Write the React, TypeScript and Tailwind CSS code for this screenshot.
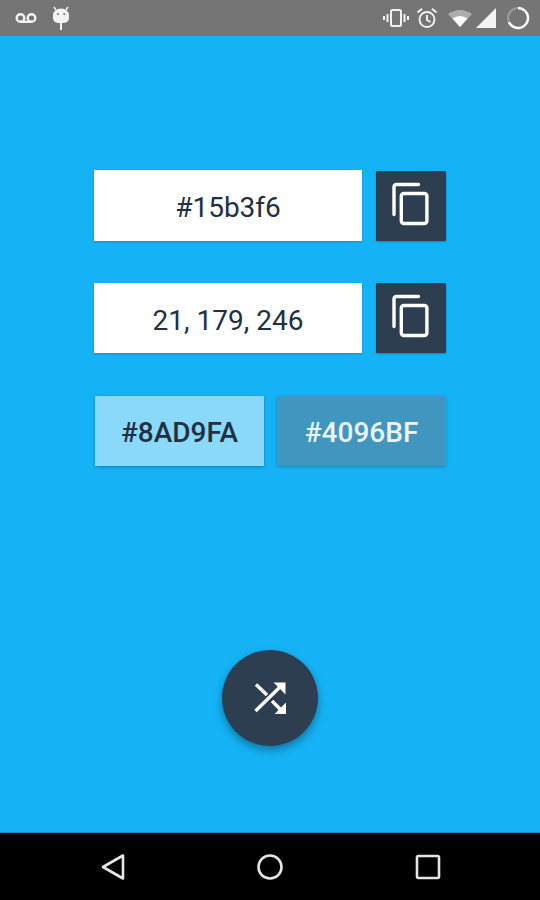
import React from "react";

function CopyIcon() {
  return (
    <svg width="44" height="48" viewBox="0 0 44 48" fill="none" stroke="white" strokeWidth="3.4">
      <path d="M29.5 2.5H7.5Q5 2.5 5 5V32.5" strokeLinecap="round" />
      <rect x="12.3" y="11.5" width="25.6" height="30" rx="2.5" />
    </svg>
  );
}

function CopyRow({ value, fieldHeight }: { value: string; fieldHeight: string }) {
  return (
    <div className="flex items-end gap-[14px]">
      <div
        className={
          "w-[268px] bg-white flex items-center justify-center pt-[5px] text-[28px] text-[#22303f] shadow-[0_1px_2px_rgba(0,0,0,0.2)] " +
          fieldHeight
        }
      >
        {value}
      </div>
      <div className="w-[70px] h-[70px] bg-[#2c3e50] flex items-center justify-center shadow-[0_1px_2px_rgba(0,0,0,0.25)]">
        <CopyIcon />
      </div>
    </div>
  );
}

function StatusBar() {
  return (
    <div className="h-[36px] bg-[#757575] flex items-center justify-between pl-[14px] pr-[10px] shrink-0">
      <div className="flex items-center gap-[14px]">
        <svg width="24" height="12" viewBox="0 0 24 12" fill="none" stroke="#f2f2f2" strokeWidth="2.4">
          <circle cx="6.5" cy="6" r="3.8" />
          <circle cx="17.5" cy="6" r="3.8" />
          <path d="M6.5 9.8H17.5" />
        </svg>
        <svg width="18" height="26" viewBox="0 0 18 26" fill="#f2f2f2">
          <path d="M1 10a8 6.5 0 0 1 16 0v3a5 5 0 0 1-5 5H6a5 5 0 0 1-5-5z" />
          <rect x="8" y="17" width="2" height="8" />
          <path d="M4 5 2 2M14 5l2-3" stroke="#f2f2f2" strokeWidth="1.4" />
          <circle cx="5.8" cy="9" r="1" fill="#757575" />
          <circle cx="12.2" cy="9" r="1" fill="#757575" />
        </svg>
      </div>
      <div className="flex items-center gap-[7px]">
        <svg width="26" height="20" viewBox="0 0 26 20" fill="none" stroke="#f2f2f2" strokeWidth="2">
          <rect x="8" y="2" width="10" height="16" rx="1.5" />
          <path d="M4.5 6v8M21.5 6v8M1 8v4M25 8v4" />
        </svg>
        <svg width="22" height="22" viewBox="0 0 22 22" fill="none" stroke="#f2f2f2" strokeWidth="1.9">
          <circle cx="11" cy="12.5" r="7.5" />
          <path d="M11 8v5l3.5 2M1.5 5.5 6 1.8M20.5 5.5 16 1.8" />
        </svg>
        <svg width="24" height="18" viewBox="0 0 24 18" className="ml-[3px]">
          <path d="M0 5Q12-3 24 5L12 18z" fill="#f2f2f2" fillOpacity="0.45" />
          <path d="M4.5 9.5Q12 4.5 19.5 9.5L12 18z" fill="#fff" />
        </svg>
        <svg width="20" height="20" viewBox="0 0 20 20" className="-ml-[3px]">
          <path d="M20 0V20H0z" fill="#f4f4f4" />
        </svg>
        <svg width="24" height="24" viewBox="0 0 24 24" fill="none" className="ml-[3px]">
          <circle cx="12" cy="12" r="10" stroke="#9a9a9a" strokeWidth="2.2" />
          <path d="M12 2a10 10 0 1 1-9 14.3" stroke="#fff" strokeWidth="2.4" />
        </svg>
      </div>
    </div>
  );
}

function NavBar() {
  return (
    <div className="h-[67px] bg-black flex items-center pl-[100px] shrink-0">
      <svg width="28" height="28" viewBox="0 0 28 28" fill="none" stroke="#e6e6e6" strokeWidth="2.6" strokeLinejoin="round">
        <path d="M23 2.5V25.5L3 14z" />
      </svg>
      <svg width="28" height="28" viewBox="0 0 28 28" fill="none" stroke="#e6e6e6" strokeWidth="2.6" className="ml-[128px]">
        <circle cx="14" cy="14" r="11.5" />
      </svg>
      <svg width="26" height="26" viewBox="0 0 26 26" fill="none" stroke="#e6e6e6" strokeWidth="2.6" strokeLinejoin="round" className="ml-[131px]">
        <rect x="2" y="2" width="22" height="22" rx="1.5" />
      </svg>
    </div>
  );
}

export default function App() {
  return (
    <div
      className="w-[540px] h-[900px] flex flex-col overflow-hidden"
      style={{ fontFamily: "Roboto, sans-serif" }}
    >
      <StatusBar />
      <div className="flex-1 bg-[#15b3f6] flex flex-col pt-[134px] pl-[94px] pr-[94px] border-b border-[#1290c8]">
        <CopyRow value="#15b3f6" fieldHeight="h-[71px]" />
        <div className="mt-[42px]">
          <CopyRow value="21, 179, 246" fieldHeight="h-[70px]" />
        </div>
        <div className="mt-[43px] flex gap-[13px] pl-[1px]">
          <div className="w-[169px] h-[70px] bg-[#8ad9fa] flex items-center justify-center pt-[3px] text-[28px] font-medium text-[#22303f] shadow-[0_1px_3px_rgba(0,0,0,0.3)]">
            #8AD9FA
          </div>
          <div className="w-[169px] h-[70px] bg-[#4096bf] flex items-center justify-center pt-[3px] text-[28px] font-medium text-[#ecf5f9] shadow-[0_1px_3px_rgba(0,0,0,0.25)]">
            #4096BF
          </div>
        </div>
        <div className="mt-[184px] flex justify-center">
          <div className="w-[96px] h-[96px] rounded-full bg-[#2c3e50] flex items-center justify-center shadow-[0_4px_8px_rgba(0,0,0,0.35)]">
            <svg width="36" height="36" viewBox="0 0 36 36" fill="white" stroke="white" strokeWidth="3.4">
              <path d="M3.5 31 29 6" fill="none" />
              <path d="M24 3.5H32.5V12z" strokeWidth="2" />
              <path d="M4 4.5 15 15M20 21 29.5 30.5" fill="none" />
              <path d="M25 33H33V25z" strokeWidth="2" />
            </svg>
          </div>
        </div>
      </div>
      <NavBar />
    </div>
  );
}
